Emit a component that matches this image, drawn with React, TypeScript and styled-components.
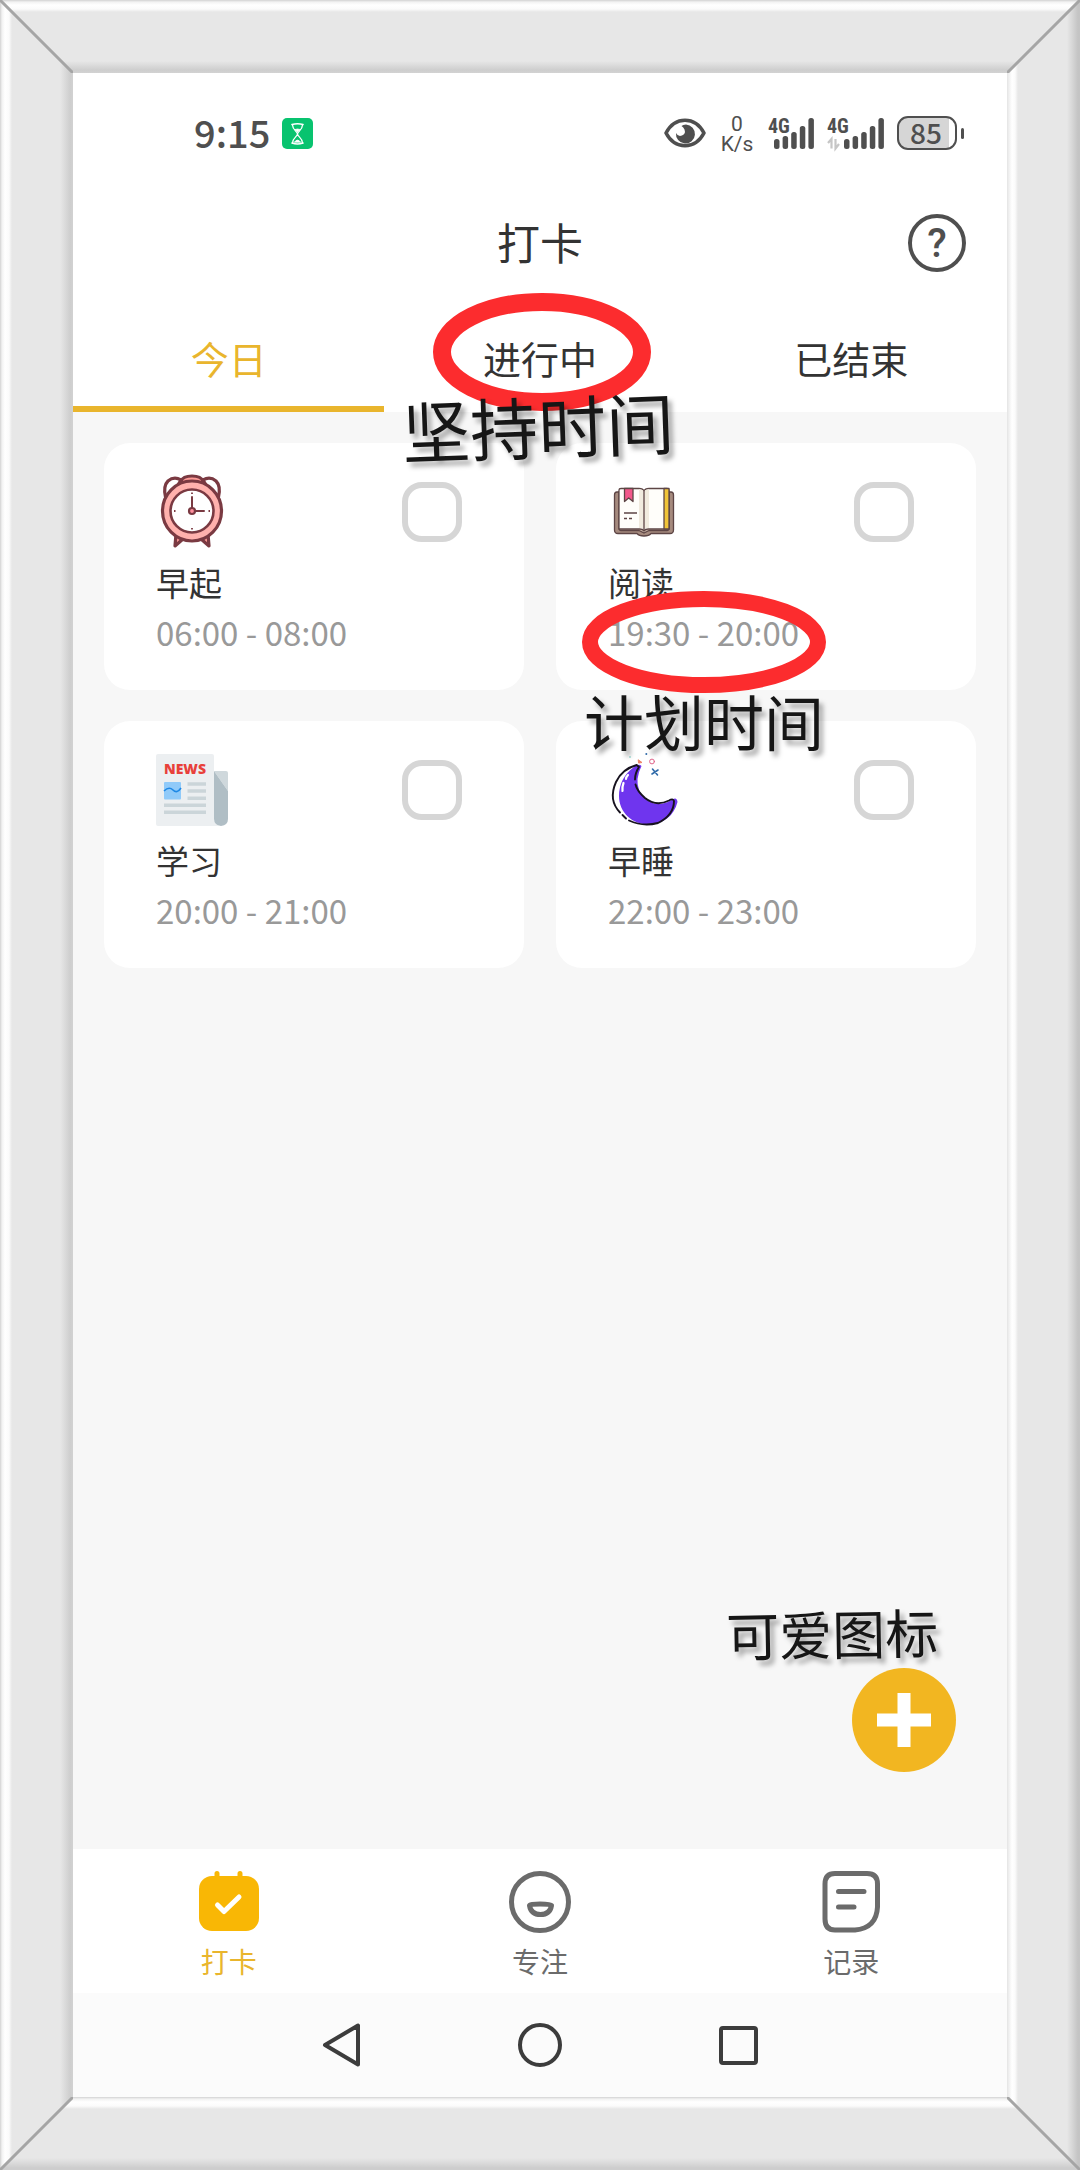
import React, { useState } from "react";
import styled, { createGlobalStyle } from "styled-components";

const FRAME = 73;
const INK = "#333333";
const STATUS = "#4f4f4f";
const GOLD = "#e9b52d";
const MUTED = "#6b6b6b";

const GlobalStyle = createGlobalStyle`
  * { box-sizing: border-box; }
  body { margin: 0; background: #e7e7e7; }
  body, button, input { font-family: "Noto Sans CJK SC", "Noto Sans", sans-serif; }
  button { margin: 0; padding: 0; border: 0; background: none; color: inherit; cursor: pointer; }
  svg { display: block; overflow: visible; }
`;

/* ---------- picture frame ---------- */

const Frame = styled.div`
  min-height: 100vh;
  display: grid;
  grid-template-columns: ${FRAME}px minmax(0, 1fr) ${FRAME}px;
  grid-template-rows: ${FRAME}px minmax(0, 1fr) ${FRAME}px;
`;

const litEdge = "#d2d2d2 0, #f2f2f2 2px, #ffffff 5px, #fbfbfb 9px, #e7e7e7 12px";

const TopRail = styled.div`
  grid-area: 1 / 1 / 2 / 4;
  background: linear-gradient(to bottom, ${litEdge}, #e7e7e7 61px, #cecece 70px, #d2d2d2 73px);
  clip-path: polygon(0 0, 100% 0, calc(100% - ${FRAME}px) 100%, ${FRAME}px 100%);
`;

const BottomRail = styled.div`
  grid-area: 3 / 1 / 4 / 4;
  background: linear-gradient(to bottom, ${litEdge}, #e7e7e7 61px, #cdcdcd 71px, #cdcdcd 73px);
  clip-path: polygon(${FRAME}px 0, calc(100% - ${FRAME}px) 0, 100% 100%, 0 100%);
`;

const LeftRail = styled.div`
  grid-area: 1 / 1 / 4 / 2;
  background: linear-gradient(to right, ${litEdge}, #e7e7e7 60px, #cecece 70px, #d2d2d2 73px);
  clip-path: polygon(0 0, 100% ${FRAME}px, 100% calc(100% - ${FRAME}px), 0 100%);
`;

const RightRail = styled.div`
  grid-area: 1 / 3 / 4 / 4;
  background: linear-gradient(to right, #e4e4e4 0, #f0f0f0 2px, #ffffff 5px, #fbfbfb 8px, #e7e7e7 11px, #e7e7e7 60px, #c4c4c4 71px, #c4c4c4 73px);
  clip-path: polygon(0 ${FRAME}px, 100% 0, 100% 100%, 0 calc(100% - ${FRAME}px));
`;

const Mitre = styled.div<{ $row: number; $col: number; $to: string }>`
  grid-row: ${(p) => p.$row};
  grid-column: ${(p) => p.$col};
  z-index: 1;
  background: linear-gradient(
    ${(p) => p.$to},
    rgba(165, 165, 165, 0) calc(50% - 2px),
    rgba(165, 165, 165, 1) calc(50% - 1px),
    rgba(165, 165, 165, 1) calc(50% + 1px),
    rgba(165, 165, 165, 0) calc(50% + 2px)
  );
`;

const Screen = styled.div`
  grid-area: 2 / 2 / 3 / 3;
  display: flex;
  flex-direction: column;
  background: #ffffff;
`;

/* ---------- status bar ---------- */

const StatusBar = styled.div`
  height: 120px;
  padding: 0 43px 0 121px;
  display: flex;
  align-items: center;
  justify-content: space-between;
  color: ${STATUS};
`;

const StatusGroup = styled.div<{ $gap: number }>`
  display: flex;
  align-items: center;
  gap: ${(p) => p.$gap}px;
`;

const Clock = styled.span`
  padding-bottom: 2px;
  font-size: 38px;
  line-height: 48px;
  font-weight: 500;
`;

const Speed = styled.span`
  width: 36px;
  padding-top: 2px;
  display: flex;
  flex-direction: column;
  align-items: center;
  font-family: Roboto, sans-serif;
  font-size: 21px;
  line-height: 20px;
`;

const Battery = styled.span`
  display: flex;
  align-items: center;
  gap: 4px;

  &::after {
    content: "";
    width: 3px;
    height: 11px;
    border-radius: 2px;
    background: ${STATUS};
  }
`;

const BatteryBody = styled.span`
  width: 60px;
  height: 34px;
  padding: 0 2px 2px 0;
  border: 2px solid ${STATUS};
  border-radius: 11px;
  background: linear-gradient(to right, #d6d6d6 50px, #ffffff 50px);
  display: flex;
  align-items: center;
  justify-content: center;
  font-size: 28px;
  line-height: 28px;
  font-weight: 500;
`;

/* ---------- header and tabs ---------- */

const Header = styled.header`
  height: 100px;
  padding: 0 41px;
  display: grid;
  grid-template-columns: 58px 1fr 58px;
  align-items: center;
`;

const Title = styled.h1`
  grid-column: 2;
  margin: 0;
  padding-bottom: 4px;
  text-align: center;
  font-size: 43px;
  line-height: 56px;
  font-weight: 400;
  color: ${INK};
`;

const HelpButton = styled.button`
  width: 58px;
  height: 58px;
  padding-top: 2px;
  border: 4px solid ${STATUS};
  border-radius: 50%;
  color: ${STATUS};
  font-family: Roboto, sans-serif;
  font-size: 40px;
  line-height: 48px;
  font-weight: 500;
`;

const Tabs = styled.nav`
  position: relative;
  z-index: 2;
  display: grid;
  grid-template-columns: repeat(3, 1fr);
`;

const TabCell = styled.div`
  position: relative;
  display: grid;
`;

const Tab = styled.button<{ $active: boolean }>`
  height: 119px;
  padding-top: 16px;
  border-bottom: 6px solid ${(p) => (p.$active ? GOLD : "transparent")};
  color: ${(p) => (p.$active ? GOLD : INK)};
  font-size: 38px;
  line-height: 48px;
`;

/* ---------- hand-drawn notes over the screen ---------- */

const Ring = styled.svg<{ $x: number; $y: number }>`
  position: absolute;
  left: ${(p) => p.$x}px;
  top: ${(p) => p.$y}px;
  pointer-events: none;
`;

const Note = styled.span<{ $size: number; $x: number; $y: number; $tilt?: number }>`
  position: absolute;
  left: ${(p) => p.$x}px;
  top: ${(p) => p.$y}px;
  font-size: ${(p) => p.$size}px;
  line-height: 1;
  font-weight: 400;
  white-space: nowrap;
  color: #161616;
  text-shadow: 4px 5px 5px rgba(0, 0, 0, 0.35);
  transform: rotate(${(p) => p.$tilt ?? 0}deg);
  pointer-events: none;
`;

/* ---------- habit cards ---------- */

const Content = styled.main`
  position: relative;
  flex: 1;
  padding: 31px;
  background: #f7f7f7;
`;

const CardGrid = styled.div`
  display: grid;
  grid-template-columns: repeat(2, minmax(0, 1fr));
  gap: 31px 32px;
`;

const Card = styled.article<{ $raised: boolean }>`
  position: relative;
  z-index: ${(p) => (p.$raised ? 1 : 0)};
  min-height: 247px;
  padding: 33px 62px 28px 52px;
  border-radius: 26px;
  background: #ffffff;
  display: flex;
  flex-direction: column;
`;

const CardTop = styled.div`
  display: flex;
  align-items: center;
  justify-content: space-between;
`;

const Check = styled.input`
  appearance: none;
  width: 60px;
  height: 60px;
  margin: 0;
  border: 6px solid #d6d6d6;
  border-radius: 20px;
  cursor: pointer;

  &:checked {
    border-color: ${GOLD};
    background: ${GOLD};
  }
`;

const HabitName = styled.label`
  margin-top: 10px;
  font-size: 33px;
  line-height: 48px;
  color: ${INK};
`;

const HabitTime = styled.span`
  font-size: 33px;
  line-height: 52px;
  color: #999999;
`;

const AddArea = styled.div`
  position: absolute;
  right: 51px;
  bottom: 77px;
`;

const AddButton = styled.button`
  width: 104px;
  height: 104px;
  border-radius: 50%;
  background: #f2b621;
  display: grid;
  place-items: center;
`;

/* ---------- bottom bars ---------- */

const TabBar = styled.nav`
  display: grid;
  grid-template-columns: repeat(3, 1fr);
  background: #ffffff;
`;

const BarItem = styled.button<{ $active: boolean }>`
  height: 144px;
  padding: 22px 0 14px;
  display: flex;
  flex-direction: column;
  align-items: center;
  gap: 10px;
  color: ${(p) => (p.$active ? GOLD : MUTED)};
  font-size: 28px;
  line-height: 36px;
`;

const SystemNav = styled.nav`
  height: 104px;
  display: flex;
  justify-content: center;
  gap: 138px;
  background: #fbfbfb;
`;

const SystemButton = styled.button`
  width: 60px;
  display: grid;
  place-items: center;
`;

/* ---------- drawings ---------- */

const Hourglass = () => (
  <svg width="31" height="31" viewBox="0 0 31 31" fill="none" stroke="#fff" strokeLinecap="round" strokeLinejoin="round">
    <rect width="31" height="31" rx="5" fill="#08c36f" stroke="none" />
    <path d="M10 6.500Q15.500 5 21 6.500M10 25Q15.500 27 21 25" strokeWidth="1.600" />
    <path d="M10.500 7C10.500 12 15.500 13.500 15.500 16S10.500 20 10.500 25M20.500 7C20.500 12 15.500 13.500 15.500 16S20.500 20 20.500 25" strokeWidth="1.300" />
    <path d="M13 11.500L15.500 14L18 11.500Q15.500 10.500 13 11.500ZM12.500 24Q15.500 20 18.500 24Z" fill="#fff" strokeWidth="0.800" />
  </svg>
);

const Eye = () => (
  <svg width="42" height="30" viewBox="0 0 42 30">
    <path d="M2 15C11 -2 31 -2 40 15C31 32 11 32 2 15Z" fill="none" stroke={STATUS} strokeWidth="3.600" strokeLinejoin="round" />
    <path d="M22 6.500A9.500 9.500 0 1 1 12 15Q14 19 18 17.500Q22 16 20.500 11.500Q19.500 9 17.500 8Q19 6.500 22 6.500Z" fill={STATUS} />
  </svg>
);

const BAR_TOPS = [21, 18, 14, 8, 0];

function Signal({ width, arrows }: { width: number; arrows?: boolean }) {
  const start = width - 40;
  return (
    <svg width={width} height="31" viewBox={`0 0 ${width} 31`} fill={STATUS}>
      <text x="0" y="15" fontFamily="'Liberation Sans Narrow', 'Roboto Condensed', Roboto, sans-serif" fontWeight="700" fontSize="20">
        4G
      </text>
      {BAR_TOPS.map((top, i) => (
        <rect key={top} x={start + i * 8.6} y={top} width="5.500" height={31 - top} rx="2.500" />
      ))}
      {arrows && (
        <path d="M1 25L4.500 21V30.500M8.500 21V30.500L12 26" fill="none" stroke="#c6c6c6" strokeWidth="2.200" />
      )}
    </svg>
  );
}

const AlarmArt = () => (
  <svg width="72" height="72" viewBox="0 0 72 72" stroke="#7a3a42" strokeWidth="3.200" strokeLinejoin="round">
    <path d="M20 58L19 70L27 63ZM52 58L53 70L45 63Z" fill="#ff9c98" />
    <path d="M9.500 21Q7 10 12 5Q18 0 25 4L15 20ZM62.500 21Q65 10 60 5Q54 0 47 4L57 20Z" fill="#fff" />
    <path d="M25 5Q27 0 36 0T47 5L46 9H26Z" fill="#ff9c98" />
    <ellipse cx="36" cy="35" rx="29.500" ry="30" fill="#ffb1ad" />
    <circle cx="36" cy="35" r="21.500" fill="#fff" strokeWidth="2.600" />
    <path d="M36 21V32M39 35H48" strokeWidth="2" strokeLinecap="round" />
    <circle cx="36" cy="35" r="3" fill="#ff8f9d" strokeWidth="2.200" />
    <path d="M36 16.500V18M36 52V53.500M18 35H19.500M52.500 35H54" strokeWidth="1.800" />
  </svg>
);

const BookArt = () => (
  <svg width="72" height="72" viewBox="0 0 72 72" stroke="#5d4545" strokeWidth="1.300" strokeLinejoin="round">
    <path d="M9 16Q6.500 16 6.500 19V54Q6.500 57.500 10 57.500H29Q31 60 36 60T43 57.500H62Q65.500 57.500 65.500 54V19Q65.500 16 63 16Z" fill="#a58a7e" />
    <path d="M11 16V52Q11 54.500 13 54.500H31L36 57L41 54.500H59Q61 54.500 61 52V16Z" fill="#c9b4a6" />
    <path d="M11 14Q11 12.500 13 12.500H31Q35 12.500 36 15Q37 12.500 41 12.500H59Q61 12.500 61 14V53H40Q37 53 36 55Q35 53 32 53H11Z" fill="#fffefa" />
    <path d="M31 13.200Q35 13.200 36 16V53Q35 52 31 52ZM41 13.200Q37 13.200 36 16V53Q37 52 41 52Z" fill="#f1ebdf" stroke="none" />
    <path d="M36 15V55" />
    <rect x="56" y="12.500" width="5" height="40.500" fill="#f0c438" />
    <path d="M16.500 12.500V25.500L20.700 22L25 25.500V12.500Z" fill="#f2588a" />
    <path d="M16 37H29M16 42.500H19M21 42.500H24" strokeWidth="1.500" />
  </svg>
);

const NewsArt = () => (
  <svg width="72" height="72" viewBox="0 0 72 72">
    <path d="M58 17H70Q72 17 72 19V37Z" fill="#cfd8dc" />
    <path d="M2 0H56Q58 0 58 2V65Q58 70 63 72H2Q0 72 0 70V2Q0 0 2 0Z" fill="#eceff1" />
    <path d="M58 17V65Q58 71 65 72Q72 71 72 65V37Z" fill="#b0bec5" />
    <text x="8" y="20" fontFamily="'Open Sans', 'Noto Sans', sans-serif" fontWeight="800" fontSize="14" fill="#e8403a">
      NEWS
    </text>
    <rect x="8" y="28" width="17" height="17.500" rx="1" fill="#90caf9" />
    <path d="M8 37Q13 32 17 36T25 34" fill="none" stroke="#1e88e5" strokeWidth="1.600" />
    <path d="M31.500 30H50M31.500 37H50M31.500 44.300H50M8 51.300H50M8 58.300H50" stroke="#cbd5d9" strokeWidth="3.400" />
  </svg>
);

const MoonArt = () => (
  <svg width="72" height="72" viewBox="0 0 72 72" fill="none" strokeLinecap="round" strokeLinejoin="round">
    <path d="M26 13Q31 9 33.500 12Q27 25 31 36Q38 50 52 50Q60 49 65 45Q69 43 69.500 48C66 62 55 70 42 70.500C25 71 11 59 11 42Q11 24 26 13Z" fill="#6f35ee" />
    <path d="M31 13L28.700 11Q14 15 8 28Q0 46 12 58.500M14.500 61L18 64.500M21 66.500Q35 73 50 69Q66 61 66 47Q65 44 61 46.500Q48 53 37 44Q29 37 27.500 30.500M27 25.500Q27 19 31 13" stroke="#17121f" strokeWidth="1.900" />
    <path d="M20 21Q18 23 18 25M15.500 29Q14 33 14.500 37" stroke="#fff" strokeWidth="2.200" />
    <path d="M44.500 15L49.500 21M50 16L44 20" stroke="#2f6aa8" strokeWidth="1.600" />
    <circle cx="44" cy="7.500" r="2.400" stroke="#e0648a" strokeWidth="1" />
    <path d="M30.500 6L34 8.500L31 9Z" fill="#ef8467" stroke="#ef8467" />
    <circle cx="38.300" cy="0" r="1" fill="#2f6aa8" />
    <circle cx="22" cy="3" r="0.800" fill="#6ecbc0" />
  </svg>
);

const CheckInIcon = () => (
  <svg width="62" height="62" viewBox="0 0 62 62" fill="none" strokeLinecap="round" strokeLinejoin="round">
    <path d="M19 2.500V8M42 2.500V8" stroke="#f9b705" strokeWidth="5" />
    <rect x="1" y="5" width="60" height="55" rx="13" fill="#f9b705" />
    <path d="M19.500 34L26 40.500L41 26" stroke="#fff" strokeWidth="5" />
  </svg>
);

const FocusIcon = () => (
  <svg width="62" height="62" viewBox="0 0 62 62" fill="none" stroke={MUTED} strokeWidth="5" strokeLinejoin="round">
    <circle cx="31" cy="31" r="28.500" />
    <path d="M20.500 34.500Q20.500 33 31 33T42.500 34.500Q41 43.500 31.500 43.500T20.500 34.500Z" />
  </svg>
);

const RecordIcon = () => (
  <svg width="62" height="62" viewBox="0 0 62 62" fill="none" stroke={MUTED} strokeWidth="5" strokeLinecap="round">
    <path d="M15 2.500H47Q57.500 2.500 57.500 13V36Q56.500 57 35 59H15Q5 59 5 48V13Q5 2.500 15 2.500Z" />
    <path d="M18.500 20.500H44M18.500 36H34" />
  </svg>
);

/* ---------- data ---------- */

const TAB_NAMES = ["今日", "进行中", "已结束"];

const HABITS = [
  { id: "wake", name: "早起", time: "06:00 - 08:00", art: <AlarmArt /> },
  { id: "read", name: "阅读", time: "19:30 - 20:00", art: <BookArt />, note: "计划时间" },
  { id: "study", name: "学习", time: "20:00 - 21:00", art: <NewsArt /> },
  { id: "sleep", name: "早睡", time: "22:00 - 23:00", art: <MoonArt /> },
];

const BAR_ITEMS = [
  { name: "打卡", icon: <CheckInIcon /> },
  { name: "专注", icon: <FocusIcon /> },
  { name: "记录", icon: <RecordIcon /> },
];

export default function App() {
  const [tab, setTab] = useState(0);
  const [section, setSection] = useState(0);

  return (
    <>
      <GlobalStyle />
      <Frame>
        <TopRail />
        <LeftRail />
        <RightRail />
        <BottomRail />
        <Mitre $row={1} $col={1} $to="to top right" />
        <Mitre $row={1} $col={3} $to="to top left" />
        <Mitre $row={3} $col={1} $to="to top left" />
        <Mitre $row={3} $col={3} $to="to top right" />

        <Screen>
          <StatusBar>
            <StatusGroup $gap={12}>
              <Clock>9:15</Clock>
              <Hourglass />
            </StatusGroup>
            <StatusGroup $gap={13}>
              <Eye />
              <Speed>
                <span>0</span>
                <span>K/s</span>
              </Speed>
              <Signal width={46} />
              <Signal width={57} arrows />
              <Battery>
                <BatteryBody>85</BatteryBody>
              </Battery>
            </StatusGroup>
          </StatusBar>

          <Header>
            <Title>打卡</Title>
            <HelpButton aria-label="?">?</HelpButton>
          </Header>

          <Tabs>
            {TAB_NAMES.map((name, i) => (
              <TabCell key={name}>
                <Tab $active={tab === i} onClick={() => setTab(i)}>
                  {name}
                </Tab>
                {i === 1 && (
                  <>
                    <Ring $x={48} $y={0} width="220" height="118" viewBox="0 0 220 118">
                      <ellipse cx="110" cy="59" rx="100" ry="50" fill="none" stroke="#fc2c2e" strokeWidth="18" />
                    </Ring>
                    <Note $size={68} $x={18} $y={98} $tilt={-2}>
                      坚持时间
                    </Note>
                  </>
                )}
              </TabCell>
            ))}
          </Tabs>

          <Content>
            <CardGrid>
              {HABITS.map((habit) => (
                <Card key={habit.id} $raised={Boolean(habit.note)}>
                  <CardTop>
                    {habit.art}
                    <Check type="checkbox" id={habit.id} />
                  </CardTop>
                  <HabitName htmlFor={habit.id}>{habit.name}</HabitName>
                  <HabitTime>{habit.time}</HabitTime>
                  {habit.note && (
                    <>
                      <Ring $x={26} $y={148} width="244" height="102" viewBox="0 0 244 102">
                        <ellipse cx="122" cy="51" rx="114" ry="43" fill="none" stroke="#fc2c2e" strokeWidth="16" />
                      </Ring>
                      <Note $size={60} $x={28} $y={247}>
                        {habit.note}
                      </Note>
                    </>
                  )}
                </Card>
              ))}
            </CardGrid>

            <AddArea>
              <AddButton aria-label="+">
                <svg width="54" height="54" viewBox="0 0 54 54">
                  <path d="M27 0V54M0 27H54" stroke="#fff" strokeWidth="13" />
                </svg>
              </AddButton>
              <Note $size={53} $x={-126} $y={-62} $tilt={-1}>
                可爱图标
              </Note>
            </AddArea>
          </Content>

          <TabBar>
            {BAR_ITEMS.map((item, i) => (
              <BarItem key={item.name} $active={section === i} onClick={() => setSection(i)}>
                {item.icon}
                {item.name}
              </BarItem>
            ))}
          </TabBar>

          <SystemNav>
            <SystemButton aria-label="返回">
              <svg width="38" height="44" viewBox="0 0 38 44" fill="none" stroke="#3c3c3c" strokeWidth="4" strokeLinejoin="round">
                <path d="M2 22L35 2.500V41.500Z" />
              </svg>
            </SystemButton>
            <SystemButton aria-label="主页">
              <svg width="44" height="44" viewBox="0 0 44 44" fill="none" stroke="#3c3c3c" strokeWidth="4">
                <circle cx="22" cy="22" r="20" />
              </svg>
            </SystemButton>
            <SystemButton aria-label="最近">
              <svg width="39" height="39" viewBox="0 0 39 39" fill="none" stroke="#3c3c3c" strokeWidth="4">
                <rect x="2" y="2" width="35" height="35" rx="2" />
              </svg>
            </SystemButton>
          </SystemNav>
        </Screen>
      </Frame>
    </>
  );
}
